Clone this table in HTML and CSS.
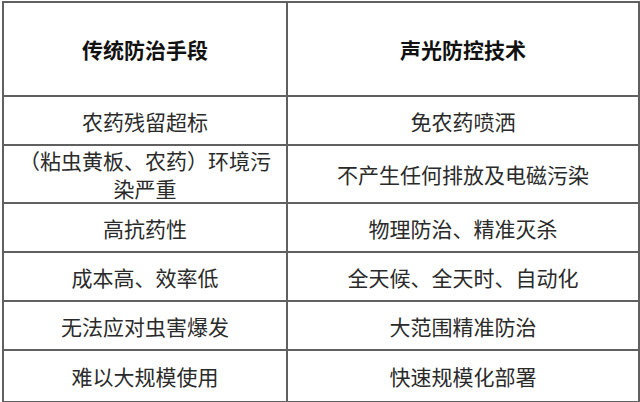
FILE: index.html
```html
<!DOCTYPE html>
<html lang="zh-CN">
<head>
<meta charset="utf-8">
<link rel="stylesheet" href="styles.css">
</head>
<body>
<table class="cmp">
  <colgroup><col class="c1"><col class="c2"></colgroup>
  <thead>
    <tr class="head"><th>传统防治手段</th><th>声光防控技术</th></tr>
  </thead>
  <tbody>
    <tr class="r49"><td>农药残留超标</td><td>免农药喷洒</td></tr>
    <tr class="r57"><td>（粘虫黄板、农药）环境污染严重</td><td>不产生任何排放及电磁污染</td></tr>
    <tr class="r49"><td>高抗药性</td><td>物理防治、精准灭杀</td></tr>
    <tr class="r49"><td>成本高、效率低</td><td>全天候、全天时、自动化</td></tr>
    <tr class="r49"><td>无法应对虫害爆发</td><td>大范围精准防治</td></tr>
    <tr class="r52"><td>难以大规模使用</td><td>快速规模化部署</td></tr>
  </tbody>
</table>
</body>
</html>
```
FILE: styles.css
```css
html, body {
  margin: 0;
  padding: 0;
  background: #ffffff;
}
body {
  font-family: "Noto Sans CJK SC", "Noto Sans", sans-serif;
  color: #2a2a2a;
}
.cmp {
  border-collapse: collapse;
  margin: 1px 0 0 2px;
  width: 636px;
  table-layout: fixed;
}
.c1 { width: 284px; }
.c2 { width: 352px; }
.cmp th, .cmp td {
  border: 2px solid #606060;
  text-align: center;
  vertical-align: middle;
  padding: 0 10px;
  font-size: 21px;
  line-height: 28px;
}
.cmp th {
  font-weight: 700;
  color: #111;
}
.cmp td {
  font-weight: 400;
}
.head { height: 94px; }
.r49 { height: 49px; }
.r57 { height: 57px; }
.r52 { height: 52px; }
```
